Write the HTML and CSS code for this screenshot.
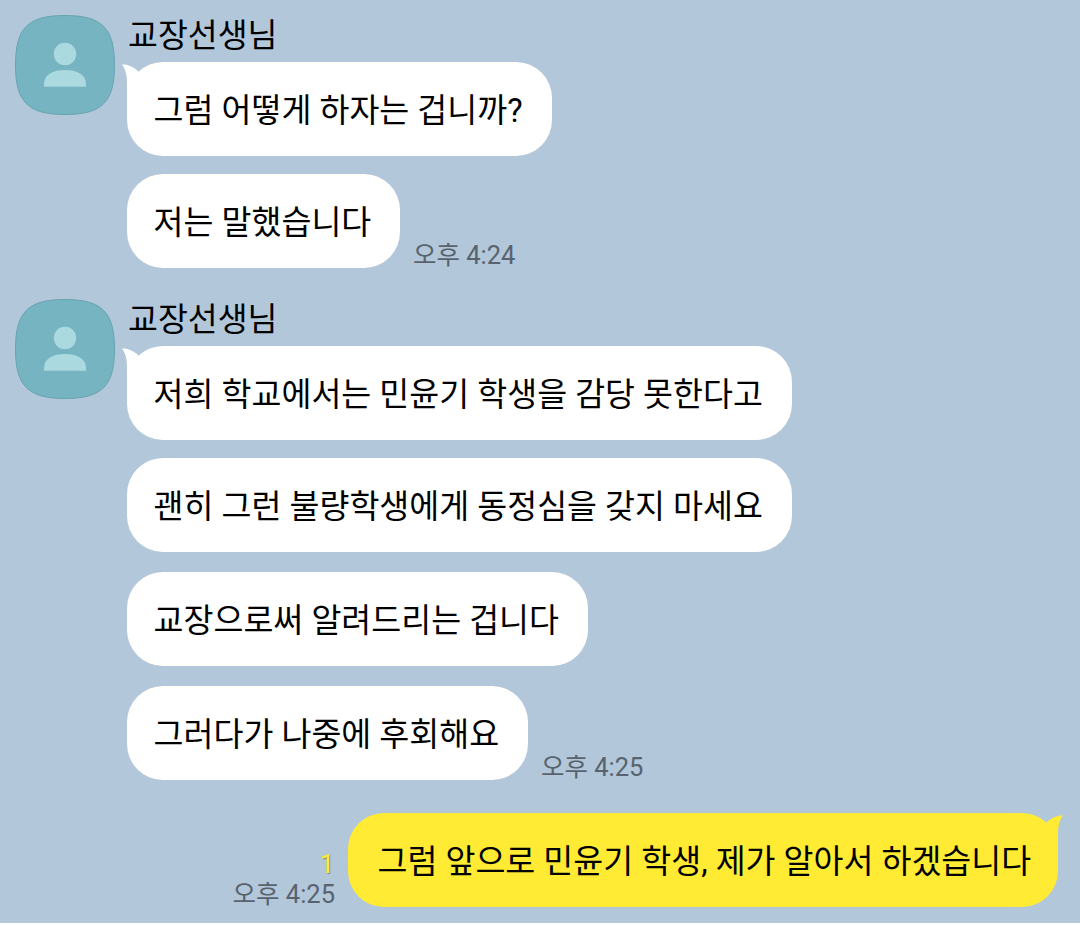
FILE: index.html
```html
<!DOCTYPE html>
<html lang="ko">
<head>
<meta charset="utf-8">
<title>채팅</title>
<link rel="stylesheet" href="styles.css">
</head>
<body>
<main class="chat">
  <section class="group">
    <svg class="avatar" viewBox="0 0 100 100"><path class="avatar-bg" d="M50 .5C87 .5 99.500 13 99.500 50S87 99.500 50 99.500.5 87 .5 50 13 .5 50 .5Z"/><circle class="person" cx="50" cy="39" r="11.200"/><path class="person" d="M29 71.700V69C29 59.500 38 55 50 55S71 59.500 71 69V71.700Z"/></svg>
    <div class="messages">
      <div class="name"><span>교장선생님</span></div>
      <div class="row"><div class="bubble w1"><svg class="tail" viewBox="0 0 30 40"><path d="M1 2.300C7 2.600 13 5 17.300 9.300L24 6V38H6V21C6 13 4.500 8 1 2.300Z"/></svg><span>그럼 어떻게 하자는 겁니까?</span></div></div>
      <div class="row"><div class="bubble w2"><span>저는 말했습니다</span></div><time>오후 4:24</time></div>
    </div>
  </section>
  <section class="group second">
    <svg class="avatar" viewBox="0 0 100 100"><path class="avatar-bg" d="M50 .5C87 .5 99.500 13 99.500 50S87 99.500 50 99.500.5 87 .5 50 13 .5 50 .5Z"/><circle class="person" cx="50" cy="39" r="11.200"/><path class="person" d="M29 71.700V69C29 59.500 38 55 50 55S71 59.500 71 69V71.700Z"/></svg>
    <div class="messages">
      <div class="name"><span>교장선생님</span></div>
      <div class="row"><div class="bubble w3"><svg class="tail" viewBox="0 0 30 40"><path d="M1 2.300C7 2.600 13 5 17.300 9.300L24 6V38H6V21C6 13 4.500 8 1 2.300Z"/></svg><span>저희 학교에서는 민윤기 학생을 감당 못한다고</span></div></div>
      <div class="row"><div class="bubble w3"><span>괜히 그런 불량학생에게 동정심을 갖지 마세요</span></div></div>
      <div class="row spaced"><div class="bubble w4"><span>교장으로써 알려드리는 겁니다</span></div></div>
      <div class="row spaced"><div class="bubble w5"><span>그러다가 나중에 후회해요</span></div><time>오후 4:25</time></div>
    </div>
  </section>
  <section class="sent">
    <div class="meta"><span class="unread">1</span><time>오후 4:25</time></div>
    <div class="bubble own"><svg class="tail" viewBox="0 0 30 40"><path d="M1 2.300C7 2.600 13 5 17.300 9.300L24 6V38H6V21C6 13 4.500 8 1 2.300Z"/></svg><span>그럼 앞으로 민윤기 학생, 제가 알아서 하겠습니다</span></div>
  </section>
</main>
</body>
</html>
```
FILE: styles.css
```css
* { box-sizing: border-box; }
body { margin: 0; background: #fff; font-family: Roboto, "Noto Sans CJK KR", sans-serif; color: #000; }
.chat { height: 923px; padding: 15px 22px 0 15px; background: #b2c7da; }
.group { display: flex; align-items: flex-start; gap: 12px; }
.second { margin-top: 31px; }
.avatar { width: 100px; height: 100px; flex: none; }
.avatar-bg { fill: #75b4c0; stroke: #67a4b1; }
.person { fill: #abd9e0; }
.messages { display: flex; flex-direction: column; }
.name { height: 47px; padding: 1px 0 0 1px; font-size: 32.5px; line-height: 40px; white-space: nowrap; }
.row { display: flex; align-items: flex-end; gap: 13px; }
.row + .row { margin-top: 18px; }
.row + .spaced { margin-top: 20px; }
.bubble { position: relative; height: 94px; padding: 2px 26.6px 0; border-radius: 36px; background: #fff; font-size: 32.55px; line-height: 95px; white-space: nowrap; }
.w1 { width: 425px; }
.w2 { width: 273px; }
.w3 { width: 665px; }
.w4 { width: 461px; }
.w5 { width: 401px; }
.tail { position: absolute; left: -6px; top: 0; width: 30px; height: 40px; fill: #fff; clip-path: polygon(0 0, 17.3px 0, 17.3px 100%, 0 100%); }
time { color: #58636e; font-size: 25.5px; line-height: 26px; white-space: nowrap; }
.sent { display: flex; justify-content: flex-end; align-items: flex-end; gap: 13px; margin-top: 33px; }
.own { width: 710px; padding: 2px 29.5px 0; background: #ffeb33; }
.own .tail { left: auto; right: -6px; transform: scaleX(-1); fill: #ffeb33; }
.meta { display: flex; flex-direction: column; align-items: flex-end; }
.unread { padding-right: 1px; color: #ffeb33; font-size: 25px; line-height: 32px; text-shadow: 1px 1px 1px #7d8b8b; }
```
